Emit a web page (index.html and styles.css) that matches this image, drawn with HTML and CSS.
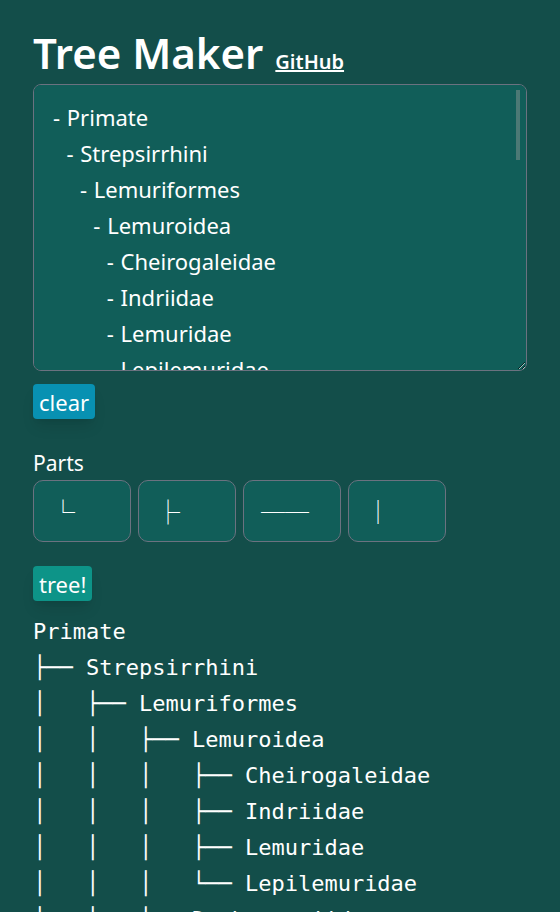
FILE: index.html
```html
<!DOCTYPE html>
<html lang="en">
<head>
  <meta charset="UTF-8">
  <meta name="viewport" content="width=device-width, initial-scale=1.0">
  <title>Tree Maker</title>
  <link rel="stylesheet" href="styles.css">
</head>
<body>
  <div class="container">
    <h1 class="title">Tree Maker <a href="#" class="github">GitHub</a></h1>

    <!-- entrada em lista com hífens -->
    <div class="input-wrap">
      <textarea id="input" class="input" spellcheck="false">- Primate
  - Strepsirrhini
    - Lemuriformes
      - Lemuroidea
        - Cheirogaleidae
        - Indriidae
        - Lemuridae
        - Lepilemuridae
      - Daubentoniidae
    - Lorisiformes
      - Galagidae
      - Lorisidae
  - Haplorhini
    - Tarsiiformes
      - Tarsiidae
    - Simiiformes
      - Platyrrhini
        - Callitrichidae
        - Cebidae
        - Aotidae
        - Pitheciidae
        - Atelidae
      - Catarrhini
        - Cercopithecidae
        - Hylobatidae
        - Hominidae</textarea>
      <span class="scroll-thumb"></span>
    </div>
    <button type="button" id="clearBtn" class="btn btn-clear">clear</button>

    <div class="parts">
      <p class="parts-label">Parts</p>
      <div class="parts-row">
        <button type="button" class="part">└</button>
        <button type="button" class="part">├</button>
        <button type="button" class="part">──</button>
        <button type="button" class="part">│</button>
      </div>
    </div>

    <button type="button" id="treeBtn" class="btn btn-tree">tree!</button>

    <pre id="output" class="output"></pre>
  </div>

  <script>
const input = document.getElementById('input');
const output = document.getElementById('output');

// Lê as linhas "- nome" e calcula o nível pela indentação
function parse(text) {
  return text.split('\n')
    .filter(line => line.trim().startsWith('-'))
    .map(line => {
      const indent = line.length - line.trimStart().length;
      return { level: Math.floor(indent / 2), name: line.trim().slice(1).trim() };
    });
}

function buildTree() {
  const items = parse(input.value);
  const lines = [];
  items.forEach((item, i) => {
    if (item.level === 0) {
      lines.push(item.name);
      return;
    }
    let prefix = '';
    for (let l = 1; l <= item.level; l++) {
      // existe outro irmão mais abaixo neste nível?
      let more = false;
      for (let j = i + 1; j < items.length; j++) {
        if (items[j].level < l) break;
        if (items[j].level === l) { more = true; break; }
      }
      if (l === item.level) prefix += more ? '├── ' : '└── ';
      else prefix += more ? '│   ' : '    ';
    }
    lines.push(prefix + item.name);
  });
  output.textContent = lines.join('\n');
}

document.getElementById('treeBtn').addEventListener('click', buildTree);
document.getElementById('clearBtn').addEventListener('click', () => {
  input.value = '';
  output.textContent = '';
});

buildTree();
  </script>
</body>
</html>
```

FILE: styles.css
```css
body {
  margin: 0;
  background-color: #134e4a;
  color: #fff;
  font-family: "Noto Sans", "Open Sans", sans-serif;
}

.container {
  padding: 27px 33px 40px;
}

.title {
  display: flex;
  align-items: baseline;
  gap: 12px;
  height: 52px;
  margin: 0 0 5px;
  font-size: 42px;
  font-weight: 600;
  line-height: 52px;
}

.github {
  color: #fff;
  font-size: 20px;
  font-weight: 600;
  line-height: normal;
}

.input-wrap {
  position: relative;
}

.input {
  display: block;
  box-sizing: border-box;
  width: 100%;
  height: 287px;
  margin: 0;
  padding: 14px 19px;
  background-color: #115e59;
  color: #fff;
  border: 1px solid #6b7280;
  border-radius: 8px;
  font-family: "Noto Sans", "Open Sans", sans-serif;
  font-size: 22px;
  line-height: 36px;
  word-spacing: 1px;
  outline: none;
}

/* barra de rolagem fina, desenhada por cima */
.scroll-thumb {
  position: absolute;
  top: 6px;
  right: 7px;
  width: 4px;
  height: 70px;
  background-color: #4c7975;
  pointer-events: none;
}

.btn {
  display: block;
  padding: 0 6px;
  height: 35px;
  border: none;
  border-radius: 4px;
  color: #fff;
  font-family: "Noto Sans", "Open Sans", sans-serif;
  font-size: 22px;
  cursor: pointer;
  box-shadow: 0 10px 15px -3px rgba(0, 0, 0, 0.1), 0 4px 6px -4px rgba(0, 0, 0, 0.1);
}

.btn-clear {
  margin-top: 13px;
  background-color: #0891b2;
}

.btn-tree {
  margin-top: 24px;
  background-color: #0d9488;
}

.parts {
  margin-top: 30px;
}

.parts-label {
  margin: 0 0 3px;
  font-size: 21px;
  line-height: 28px;
}

.parts-row {
  display: flex;
  gap: 7px;
}

.part {
  box-sizing: border-box;
  width: 98px;
  height: 62px;
  padding: 0 0 0 17px;
  text-align: left;
  background-color: #115e59;
  color: #fff;
  border: 1px solid #6b7280;
  border-radius: 10px;
  font-family: "Noto Sans CJK JP", monospace;
  font-size: 24px;
  line-height: 1;
  cursor: pointer;
}

.output {
  margin: 13px 0 0;
  font-family: "DejaVu Sans Mono", monospace;
  font-size: 22px;
  line-height: 36px;
}
```
